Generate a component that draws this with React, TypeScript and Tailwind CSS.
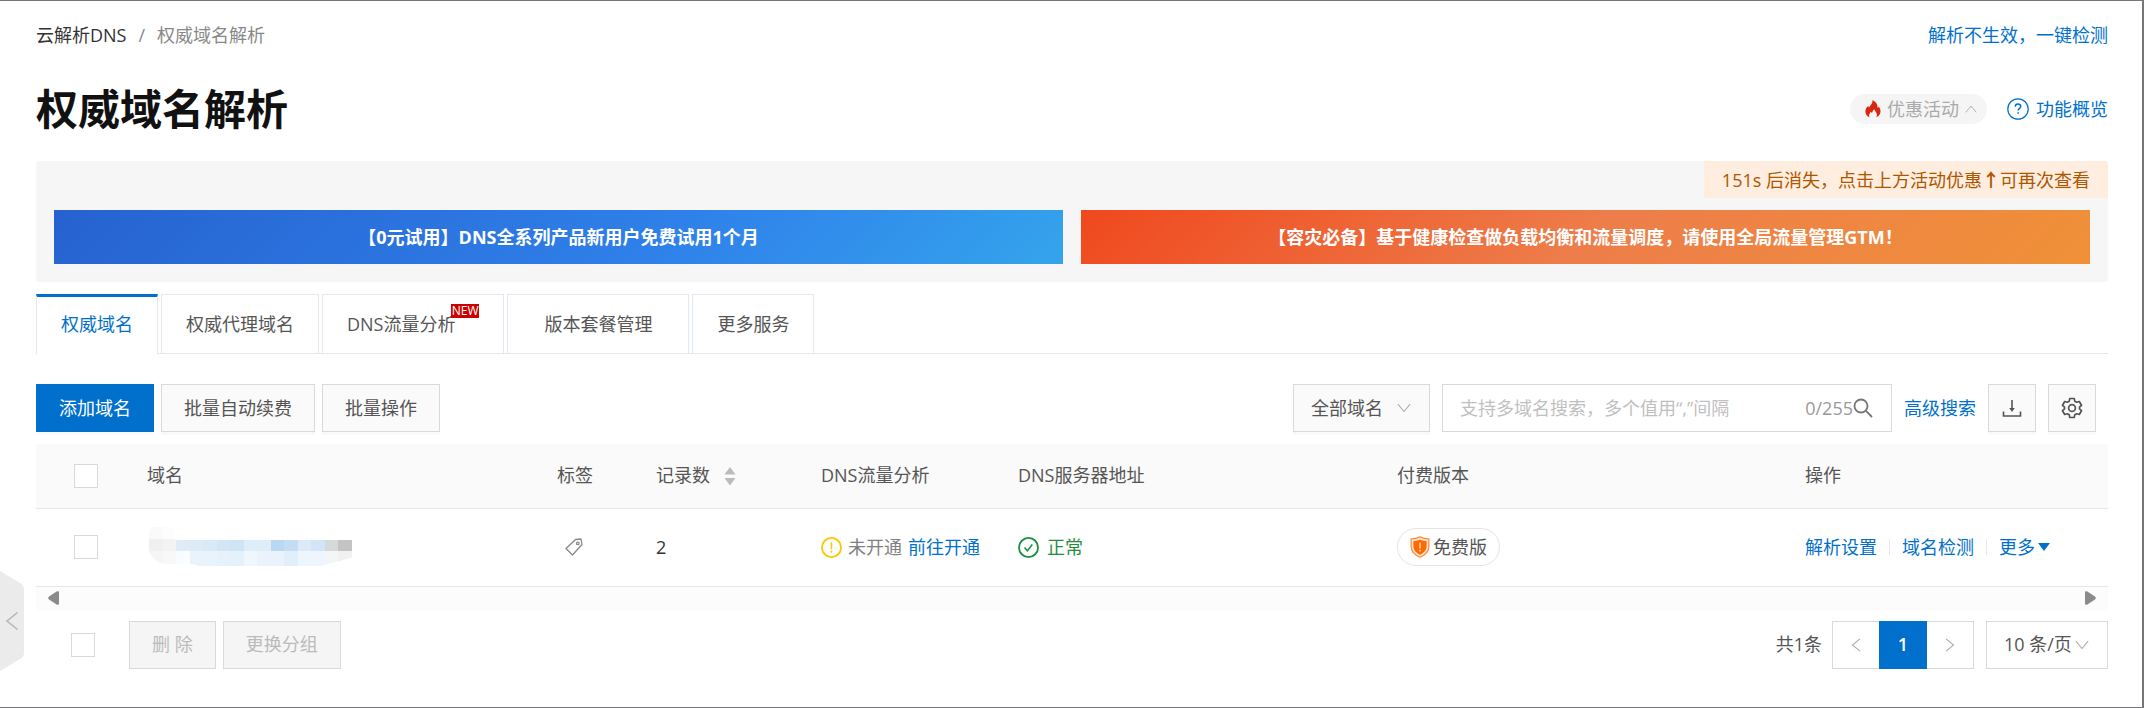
import { useState } from 'react';
import type { ReactNode } from 'react';

const tabs = [
  { name: '权威域名', className: 'px-[24px]' },
  { name: '权威代理域名', className: 'px-[24px]' },
  { name: 'DNS流量分析', className: 'pl-[24px] pr-[48px]', isNew: true },
  { name: '版本套餐管理', className: 'px-[36px]' },
  { name: '更多服务', className: 'px-[24px]' },
];

// Colours of the masked domain name, one string per mosaic cell
const mosaic = [
  ['#fafafa', '#fdfdfd', '', '', '', '', '', '', '', '', '', '', '', '', ''],
  ['#f0f0f0', '#f3f3f3', '#dfebf7', '#ddebf7', '#d9e9f7', '#d4e6f6', '#cfe4f5', '#dfedf8', '#dfedf8', '#bad8f1', '#c5ddf2', '#dceaf8', '#d2e4f6', '#d4d9da', '#c4c4c4'],
  ['#f5f5f5', '#f8f8f8', '#fafdff', '#e9f3fb', '#e9f3fb', '#e6f1fa', '#e4f1fb', '#eff6fc', '#eaf3fb', '#eaf3fb', '#e1effa', '#eef6fd', '#eff5fd', '#f4f5f6', '#f1f1f1'],
];

function Checkbox({ label }: { label: string }) {
  return (
    <input
      type="checkbox"
      aria-label={label}
      className="block size-6 appearance-none border border-[#d9d9d9] bg-white checked:bg-[#0070cc]"
    />
  );
}

function Chevron({ className }: { className: string }) {
  return (
    <svg viewBox="0 0 16 16" fill="none" stroke="currentColor" strokeWidth="1.2" className={className}>
      <path d="M1 3.500 8 12l7-8.500" />
    </svg>
  );
}

function ToolButton({ label, children }: { label: string; children: ReactNode }) {
  return (
    <button
      aria-label={label}
      className="flex size-12 items-center justify-center border border-[#d9d9d9] bg-[#fafafa] text-[#555] shadow-[0_3px_0_#f9f9f9]"
    >
      {children}
    </button>
  );
}

function FlameIcon() {
  return (
    <svg viewBox="0 0 16 18" className="h-[18px] w-4" fill="#d9260f">
      <path d="M7.300.3c.5 2.200-.4 3.500-1.700 4.900C4.900 6 4.300 6.700 4 7.700c-.5-.5-.7-1.100-.7-1.900C1.500 7.300.4 9.300.4 11.600c0 2.600 1.500 4.700 4 5.700-.8-2.400.2-4.100 1.600-5.500.3.7.6 1.100 1.100 1.400.1-1.800.9-3.100 2.300-4-.1 1.900 2.600 3.200 2.600 5.500 0 1-.3 1.900-.9 2.600 2.600-.9 4.400-3.100 4.400-5.800 0-2.100-.8-3.500-1.800-5-.2.700-.5 1.200-1.100 1.600C12.700 4.500 11 1.500 7.300.3z" />
    </svg>
  );
}

function ShieldIcon() {
  return (
    <svg viewBox="0 0 20 22" className="h-[22px] w-5">
      <path d="M10 .9c2.700 1.300 5.600 1.900 8.900 1.900v7.400c0 4.900-3.400 8.700-8.900 11-5.500-2.300-8.900-6.100-8.900-11V2.800C4.400 2.800 7.300 2.200 10 .9z" fill="#ffe3cf" stroke="#ff8a3c" strokeWidth="1.200" />
      <path d="M10 3.500c2 1 4.200 1.500 6.600 1.600v5.200c0 3.700-2.500 6.500-6.600 8.400-4.100-1.900-6.600-4.700-6.600-8.400V5.100C5.800 5 8 4.500 10 3.500z" fill="#ff6a00" />
      <path d="M10 6.500v6M10 13.700v1.800" stroke="#ffc79c" strokeWidth="1.800" />
    </svg>
  );
}

function DomainMosaic() {
  return (
    <svg viewBox="0 0 206 40" role="img" aria-label="域名已隐藏" className="block h-10 w-[206px]">
      <clipPath id="blob">
        <path d="M2 8Q2 0 8 0h20v13h178v17q-12 4-22 6l-10 3H52l-6-2H18Q10 36 6 31L1 23z" />
      </clipPath>
      <g clipPath="url(#blob)" shapeRendering="crispEdges">
        {mosaic.map((row, y) =>
          row.map((fill, x) =>
            fill ? <rect key={`${x}-${y}`} x={2 + x * 13.5} y={[0, 12, 24][y]} width="13.500" height={[12, 12, 15][y]} fill={fill} /> : null,
          ),
        )}
      </g>
    </svg>
  );
}

export default function App() {
  const [activeTab, setActiveTab] = useState('权威域名');

  return (
    <div className="relative min-h-screen border-t border-r-2 border-b border-[#77777a] bg-white pr-[34px] pl-9 font-['Open_Sans','Noto_Sans_CJK_SC',sans-serif] text-[18px] leading-[27px] text-[#555]">
      <header>
        <div className="flex items-center justify-between pt-[21px]">
          <nav className="flex gap-3">
            <a href="#dns" className="text-[#333]">云解析DNS</a>
            <span className="text-[#888]">/</span>
            <span className="text-[#888]">权威域名解析</span>
          </nav>
          <a href="#check" className="text-[#0070cc]">解析不生效，一键检测</a>
        </div>
        <div className="flex h-[112px] items-center justify-between pt-2">
          <h1 className="text-[42px] leading-[60px] font-bold text-[#111]">权威域名解析</h1>
          <div className="flex items-center gap-5">
            <button className="flex h-[30px] items-center gap-1.5 rounded-full bg-[#f5f5f5] pr-2.5 pl-[15px] text-[#aaa]">
              <FlameIcon />
              优惠活动
              <Chevron className="size-3 rotate-180" />
            </button>
            <a href="#overview" className="flex items-center gap-[7px] text-[#0070cc]">
              <svg viewBox="0 0 22 22" fill="none" stroke="currentColor" strokeWidth="1.2" className="size-[22px]">
                <circle cx="11" cy="11" r="10.200" />
                <path d="M8.300 8.700c0-1.700 1.100-2.700 2.700-2.700s2.700 1 2.700 2.400c0 1.900-2.600 2.100-2.600 4.200M11.100 14.200v1.600" strokeWidth="1.500" />
              </svg>
              功能概览
            </a>
          </div>
        </div>
      </header>

      <section className="overflow-hidden rounded-[3px] bg-[#f6f6f6]">
        <div className="flex justify-end">
          <p className="bg-[#ffeddf] px-[18px] leading-9 text-[#ad5700]">
            151s 后消失，点击上方活动优惠<span className="font-['Noto_Sans_CJK_SC',sans-serif] font-bold">↑</span>可再次查看
          </p>
        </div>
        <div className="grid grid-cols-2 gap-[18px] px-[18px] pt-3 pb-[18px] text-center font-bold text-white">
          <a href="#trial" className="bg-linear-[135deg,#2662cf,#2f80ea_60%,#34a4ec] leading-[54px]">
            【0元试用】DNS全系列产品新用户免费试用1个月
          </a>
          <a href="#gtm" className="bg-linear-[135deg,#f0481e,#ed7d4a_50%,#f09138] leading-[54px]">
            【容灾必备】基于健康检查做负载均衡和流量调度，请使用全局流量管理GTM！
          </a>
        </div>
      </section>

      <div role="tablist" className="mt-3 flex gap-[3px] shadow-[inset_0_-1px_0_#e3e8ee]">
        {tabs.map((tab) => (
          <button
            key={tab.name}
            role="tab"
            aria-selected={tab.name === activeTab}
            onClick={() => setActiveTab(tab.name)}
            className={`relative h-[60px] border-x border-[#e3e8ee] ${tab.className} ${
              tab.name === activeTab ? 'border-t-3 border-t-[#0070cc] bg-white pb-[3px] text-[#0070cc]' : 'border-t border-b'
            }`}
          >
            {tab.name}
            {tab.isNew && (
              <span className="absolute top-[9px] right-6 bg-[#c00] px-px text-[12px] leading-[14px] text-white">NEW</span>
            )}
          </button>
        ))}
      </div>

      <div className="mt-[30px] flex items-center justify-between">
        <div className="flex gap-[7px]">
          <button className="h-12 border border-[#0070cc] bg-[#0070cc] px-[22px] text-white shadow-[0_3px_0_#f9f9f9]">添加域名</button>
          <button className="h-12 border border-[#d9d9d9] bg-[#fafafa] px-[22px] shadow-[0_3px_0_#f9f9f9]">批量自动续费</button>
          <button className="h-12 border border-[#d9d9d9] bg-[#fafafa] px-[22px] shadow-[0_3px_0_#f9f9f9]">批量操作</button>
        </div>
        <div className="flex items-center gap-3 pr-3">
          <div className="grid items-center border border-[#d9d9d9] bg-[#fafafa] shadow-[0_3px_0_#f9f9f9]">
            <select aria-label="域名范围" className="col-start-1 row-start-1 h-[46px] w-[135px] appearance-none pl-[17px]">
              <option>全部域名</option>
            </select>
            <Chevron className="pointer-events-none col-start-1 row-start-1 mr-[18px] size-3.5 justify-self-end text-[#aaa]" />
          </div>
          <div className="flex h-12 w-[450px] items-center border border-[#d9d9d9] pr-[18px] pl-[17px]">
            <input
              aria-label="搜索域名"
              placeholder="支持多域名搜索，多个值用“,”间隔"
              className="min-w-0 flex-1 outline-none placeholder:text-[#bfbfbf]"
            />
            <span className="text-[#999]">0/255</span>
            <button aria-label="搜索">
              <svg viewBox="0 0 20 20" fill="none" stroke="#777" strokeWidth="1.800" className="size-5">
                <circle cx="8" cy="8" r="6.500" />
                <path d="m12.700 12.700 6.300 6.300" />
              </svg>
            </button>
          </div>
          <a href="#advanced" className="text-[#0070cc]">高级搜索</a>
          <ToolButton label="下载">
            <svg viewBox="0 0 20 20" fill="none" stroke="currentColor" strokeWidth="1.600" className="size-5">
              <path d="M1.500 13.500v4.500h17v-4.500M10 2v9" />
              <path d="m7.200 10 2.800 4 2.800-4z" fill="currentColor" stroke="none" />
            </svg>
          </ToolButton>
          <ToolButton label="设置">
            <svg viewBox="0 0 22 22" fill="none" stroke="currentColor" strokeWidth="1.700" strokeLinejoin="round" className="size-[22px]">
              <path d="M8.800 1.500h4.400l.6 2.700 1.900 1.100 2.600-.8 2.200 3.800-2 1.800v1.800l2 1.800-2.200 3.800-2.600-.8-1.900 1.100-.6 2.700H8.800l-.6-2.700-1.900-1.100-2.600.8-2.200-3.800 2-1.800v-1.800l-2-1.800 2.200-3.800 2.600.8 1.900-1.100z" />
              <circle cx="11" cy="11" r="3.400" />
            </svg>
          </ToolButton>
        </div>
      </div>

      <table className="mt-3 w-full table-fixed border-collapse text-left">
        <colgroup>
          <col className="w-[99px]" />
          <col />
          <col className="w-[99px]" />
          <col className="w-[165px]" />
          <col className="w-[197px]" />
          <col className="w-[379px]" />
          <col className="w-[408px]" />
          <col className="w-[315px]" />
        </colgroup>
        <thead>
          <tr className="h-16 border-b border-[#e3e8ee] bg-[#fafafa] *:px-3 *:font-normal">
            <th>
              <div className="flex justify-center">
                <Checkbox label="全选" />
              </div>
            </th>
            <th>域名</th>
            <th>标签</th>
            <th>
              <div className="flex items-center gap-3.5">
                记录数
                <svg viewBox="0 0 12 20" className="h-5 w-3" fill="#bbb">
                  <path d="M6 1l5.500 7.500H.5zM6 19.500l5.500-7.500H.5z" />
                </svg>
              </div>
            </th>
            <th>DNS流量分析</th>
            <th>DNS服务器地址</th>
            <th>付费版本</th>
            <th>操作</th>
          </tr>
        </thead>
        <tbody>
          <tr className="h-[78px] border-b border-[#e3e8ee] *:px-3">
            <td>
              <div className="flex justify-center">
                <Checkbox label="选择域名" />
              </div>
            </td>
            <td>
              <DomainMosaic />
            </td>
            <td>
              <button aria-label="编辑标签" className="ml-2 block">
                <svg viewBox="0 0 18 18" fill="none" stroke="#888" strokeWidth="1.300" strokeLinejoin="round" className="size-[18px]">
                  <path d="M10.500 1.500 16 1l1 5.500L7.500 17 1 10.500z" />
                  <circle cx="12.800" cy="5.400" r="1.300" />
                </svg>
              </button>
            </td>
            <td className="text-[#333]">2</td>
            <td>
              <div className="flex items-center gap-1.5 whitespace-nowrap">
                <svg viewBox="0 0 22 22" fill="none" stroke="#fac800" className="size-[21px]">
                  <circle cx="11" cy="11" r="10" strokeWidth="1.900" />
                  <path d="M11 5.500v7.500M11 14.500v2" strokeWidth="1.600" />
                </svg>
                <span className="text-[#808080]">未开通</span>
                <a href="#open" className="text-[#0070cc]">前往开通</a>
              </div>
            </td>
            <td>
              <div className="flex items-center gap-2 text-[#1e8e3e]">
                <svg viewBox="0 0 22 22" fill="none" stroke="currentColor" className="size-[21px]">
                  <circle cx="11" cy="11" r="10" strokeWidth="1.900" />
                  <path d="m6.800 11 3 3.500 5.200-6.700" strokeWidth="1.600" />
                </svg>
                正常
              </div>
            </td>
            <td>
              <div className="flex h-[38px] w-fit items-center gap-[3px] rounded-full border border-[#e5e5e5] px-3">
                <ShieldIcon />
                免费版
              </div>
            </td>
            <td>
              <div className="flex items-center gap-3 whitespace-nowrap text-[#0070cc]">
                <a href="#settings">解析设置</a>
                <span className="h-4 w-px bg-[#e3e8ee]" />
                <a href="#detect">域名检测</a>
                <span className="h-4 w-px bg-[#e3e8ee]" />
                <button className="flex items-center gap-[3px]">
                  更多
                  <svg viewBox="0 0 12 8" className="h-2 w-3" fill="currentColor">
                    <path d="M0 0h12L6 8z" />
                  </svg>
                </button>
              </div>
            </td>
          </tr>
        </tbody>
      </table>
      <div className="flex h-[23px] items-center justify-between bg-[#fcfcfc] px-3">
        <button aria-label="向左滚动">
          <svg viewBox="0 0 11 14" className="block h-3.5 w-[11px]" fill="#8b8b8b">
            <path d="M9 .3Q11-.3 11 1.500v11q0 1.800-2 1.200L1 8.500Q-.6 7 1 5.500z" />
          </svg>
        </button>
        <button aria-label="向右滚动">
          <svg viewBox="0 0 11 14" className="block h-3.5 w-[11px]" fill="#8b8b8b">
            <path d="M2 .3Q0-.3 0 1.500v11q0 1.800 2 1.200l8-5.200Q11.600 7 10 5.500z" />
          </svg>
        </button>
      </div>

      <footer className="flex items-center justify-between pt-[11px]">
        <div className="flex items-center pl-[35px]">
          <Checkbox label="选择本页" />
          <div className="ml-[34px] flex gap-[7px]">
            <button disabled className="h-12 border border-[#d9d9d9] bg-[#f5f5f5] px-[22px] text-[#bbb]">删 除</button>
            <button disabled className="h-12 border border-[#d9d9d9] bg-[#f5f5f5] px-[22px] text-[#bbb]">更换分组</button>
          </div>
        </div>
        <div className="flex items-center">
          <span className="mr-2.5">共1条</span>
          <div className="flex h-12 border border-[#d9d9d9]">
            <button aria-label="上一页" disabled className="flex w-[46px] items-center justify-center text-[#aaa]">
              <Chevron className="size-3.5 rotate-90" />
            </button>
            <button className="-my-px w-12 bg-[#0070cc] font-semibold text-white">1</button>
            <button aria-label="下一页" disabled className="flex w-[46px] items-center justify-center text-[#aaa]">
              <Chevron className="size-3.5 -rotate-90" />
            </button>
          </div>
          <div className="ml-3 grid items-center border border-[#d9d9d9]">
            <select aria-label="每页条数" className="col-start-1 row-start-1 h-[46px] w-[120px] appearance-none pl-[17px]">
              <option>10 条/页</option>
            </select>
            <Chevron className="pointer-events-none col-start-1 row-start-1 mr-[18px] size-3.5 justify-self-end text-[#aaa]" />
          </div>
        </div>
      </footer>

      {/* Collapse handle for the side menu */}
      <button aria-label="展开菜单" className="absolute bottom-9 left-0">
        <svg viewBox="0 0 24 100" className="block h-[100px] w-6" fill="none">
          <path d="M0 0l20 12q4 2 4 6v64q0 4-4 6L0 100z" fill="#ebebeb" />
          <path d="M17.500 41.500 7 50l10.500 8.500" stroke="#b5b5b5" strokeWidth="1.500" />
        </svg>
      </button>
    </div>
  );
}
